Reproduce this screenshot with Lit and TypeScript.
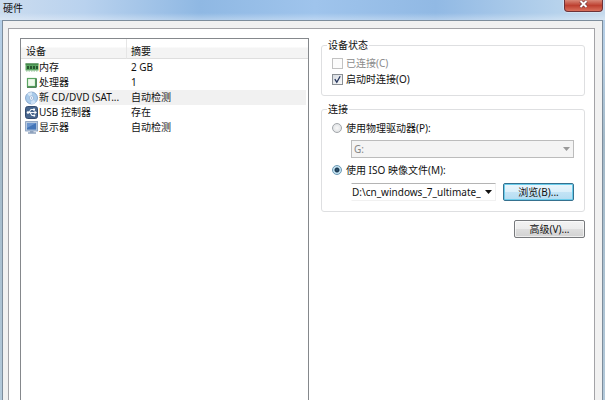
import { LitElement, html, css, svg, nothing } from "lit";
import { customElement, state } from "lit/decorators.js";

interface Device {
  icon: keyof typeof icons;
  name: string;
  summary: string;
}

const icons = {
  memory: svg`
    <rect x="0.5" y="2.5" width="13" height="7" fill="#5aa561"/>
    <rect x="0.5" y="2.5" width="13" height="1" fill="#37773f"/>
    <path d="M2 5h2v3h-2zM5 5h2v3h-2zM8 5h2v3h-2zM11 5h2v3h-2z" fill="#27552f"/>
    <path d="M1 10h12" stroke="#8fc093" stroke-dasharray="1.5 1"/>`,
  cpu: svg`
    <rect x="2.5" y="2.5" width="8" height="8" fill="#eefaeb" stroke="#5aa562" stroke-width="1.2"/>
    <path d="M2 11.3h9.3v-9" fill="none" stroke="#2f6b37"/>`,
  disc: svg`
    <circle cx="6.5" cy="7" r="6" fill="#a9cbea" stroke="#7899c4" stroke-width="0.8"/>
    <path d="M6.5 7 2 2.8A6 6 0 0 1 7 1.2z" fill="#d6e8f8"/>
    <path d="M6.5 7 11 11.2A6 6 0 0 1 6 13z" fill="#cde1f5"/>
    <circle cx="6.5" cy="7" r="2.2" fill="#f6faff" stroke="#8eabd0" stroke-width="0.7"/>
    <circle cx="6.5" cy="7" r="0.8" fill="#7f9fc8"/>`,
  usb: svg`
    <rect x="0.5" y="0.5" width="12" height="12" rx="2.2" fill="#48668d" stroke="#344c70"/>
    <path d="M2.5 6.5h8M4 6.5l2-3h2.5M5 6.5l2 3h2" fill="none" stroke="#f3f7fc" stroke-width="1.1"/>
    <circle cx="3" cy="6.5" r="1.3" fill="#fff"/>
    <path d="M9.5 4.7 12 6.5 9.5 8.3z" fill="#fff"/>
    <rect x="8" y="2.6" width="2" height="2" fill="#fff"/>
    <circle cx="9.2" cy="9.6" r="1.1" fill="#fff"/>`,
  display: svg`
    <rect x="0.6" y="0.6" width="12" height="9.4" fill="#b9cbe0" stroke="#7f97b8" stroke-width="0.8"/>
    <rect x="2" y="2" width="9.2" height="6.6" fill="#4375b8"/>
    <path d="M2 2h9.2L2 7z" fill="#6c96cf"/>
    <path d="M5 10h3.5v1.2h2.5v1.5h-8v-1.5h2z" fill="#8fa2bd"/>`,
};

const arrow = svg`<path d="M0 0h7L3.5 4z" fill="currentColor"/>`;

@customElement("app-root")
export class AppRoot extends LitElement {
  @state() private selected = 2;
  @state() private source: "drive" | "iso" = "iso";
  @state() private connectOnStart = true;

  private devices: Device[] = [
    { icon: "memory", name: "内存", summary: "2 GB" },
    { icon: "cpu", name: "处理器", summary: "1" },
    { icon: "disc", name: "新 CD/DVD (SAT...", summary: "自动检测" },
    { icon: "usb", name: "USB 控制器", summary: "存在" },
    { icon: "display", name: "显示器", summary: "自动检测" },
  ];

  static styles = css`
    :host {
      display: block;
      font: 10px/15px "Noto Sans", "Noto Sans CJK SC", sans-serif;
      color: #111;
    }
    * {
      box-sizing: border-box;
    }
    .window {
      display: flex;
      flex-direction: column;
      min-height: 100vh;
      padding: 0 2px;
      background: linear-gradient(#b4cfea, #b5cde2 60px, #a3b9c8 140px, #b3c9da);
    }
    .titlebar {
      display: flex;
      justify-content: space-between;
      align-items: flex-start;
      height: 20px;
      margin: 0 -2px;
      padding: 0 2px 0 3px;
      background:
        linear-gradient(#ffffff00 13px, #ffffff50),
        linear-gradient(90deg, #cbdcef, #b9d2ee 14%, #8fb8e3 33%, #9fc4ec 52%, #91b9e4 72%, #b6d2ec 92%, #c5d9ec);
    }
    h1 {
      margin: 0;
      padding-top: 1px;
      font: inherit;
    }
    .close {
      display: grid;
      place-items: center;
      width: 39px;
      height: 12px;
      padding: 0 0 3px;
      border: 1px solid #6d3238;
      border-top: 0;
      border-radius: 0 0 4px 4px;
      background: linear-gradient(#d88878, #bd4030 50%, #d9705c);
      box-shadow: 0 0 0 1px #dfe9f4a0;
    }
    .client {
      flex: 1;
      display: flex;
      padding: 7px 7px 0 5px;
      border: 1px solid #7d8d9c;
      border-bottom: 0;
      background: #f1f1f1;
    }
    .page {
      flex: 1;
      display: flex;
      gap: 12px;
      padding: 9px 9px 0 11px;
      border: 1px solid #a3a3a7;
      border-bottom: 0;
      background: #fff;
    }
    .list {
      flex: 1;
      min-width: 0;
      border: 1px solid #85888c;
      border-bottom: 0;
    }
    table {
      width: 100%;
      border-collapse: separate;
      border-spacing: 0;
      table-layout: fixed;
    }
    th {
      height: 20px;
      padding: 5px 0 0 5px;
      border-bottom: 1px solid #dedede;
      background: linear-gradient(#fff 8px, #f4f4f4 9px);
      font-weight: normal;
      text-align: left;
      line-height: 14px;
    }
    .name-col {
      width: 105px;
    }
    th + th {
      padding-left: 4px;
      border-left: 1px solid #e6e6e6;
    }
    .gap td {
      height: 1px;
    }
    td {
      height: 15px;
      padding: 0;
      line-height: 15px;
      white-space: nowrap;
    }
    .device {
      display: flex;
      align-items: center;
      height: 15px;
      padding-left: 4px;
    }
    .device svg {
      flex: none;
      width: 14px;
      height: 14px;
    }
    .device span {
      flex: 1;
    }
    .summary {
      padding-left: 5px;
      border-right: 2px solid #fff;
    }
    .selected .device span,
    .selected .summary {
      background: #f1f1f1;
    }
    .settings {
      display: flex;
      flex-direction: column;
      align-items: flex-end;
      width: 264px;
    }
    fieldset {
      width: 100%;
      min-width: 0;
      margin: 0 0 6px;
      padding: 3px 10px 8px;
      border: 1px solid #dedfe1;
      border-radius: 3px;
    }
    .source {
      padding: 4px 10px 10px;
      margin-bottom: 8px;
    }
    legend {
      margin-left: -5px;
      padding: 0 1px;
      line-height: 14px;
    }
    .option {
      display: flex;
      align-items: center;
      gap: 3px;
      width: max-content;
      height: 16px;
    }
    .option.off {
      color: #8b8b8b;
    }
    .box {
      display: grid;
    }
    .box > * {
      grid-area: 1 / 1;
    }
    .box svg {
      width: 11px;
      height: 11px;
      pointer-events: none;
    }
    input {
      appearance: none;
      width: 11px;
      height: 11px;
      margin: 0;
      border: 1px solid #8a8f94;
      background: linear-gradient(135deg, #d7dce2, #fafafa);
    }
    input:disabled {
      border-color: #c2c2c2;
      background: #fcfcfc;
    }
    input[type="radio"] {
      width: 10px;
      height: 10px;
      margin-right: 1px;
      border-color: #a2a6aa;
      border-radius: 50%;
      background: radial-gradient(#f8f8f8, #d9dcdf);
    }
    input[type="radio"]:checked {
      border-color: #6d9ab5;
      background: radial-gradient(#4f9fc2 0, #152f49 1px, #24435c 2px, #c5e3f2 3px);
    }
    .row {
      display: flex;
      gap: 7px;
      margin: 4px 0 4px 19px;
    }
    .row.file {
      margin: 5px 0 0 19px;
    }
    .combo {
      flex: 1;
      min-width: 0;
      display: grid;
      align-items: center;
    }
    .combo > * {
      grid-area: 1 / 1;
    }
    .combo svg {
      justify-self: end;
      width: 7px;
      height: 4px;
      margin-right: 4px;
      pointer-events: none;
    }
    .combo.off svg {
      color: #999;
    }
    select {
      appearance: none;
      width: 100%;
      height: 18px;
      padding: 0 14px 0 0;
      border: 1px solid #f1f1f1;
      border-top-color: #b4b4b4;
      border-left-color: #fff;
      border-radius: 0;
      background: #fff;
      color: inherit;
      font: inherit;
      overflow: hidden;
    }
    select:disabled {
      padding-left: 2px;
      border-color: #bcbcbc;
      background: #f4f4f4;
      color: #858585;
      opacity: 1;
    }
    .push {
      width: 71px;
      height: 18px;
      padding: 0;
      border: 1px solid #77797c;
      border-radius: 2px;
      background: linear-gradient(#f3f3f3, #ececec 50%, #dedede 51%, #d2d2d2);
      box-shadow: inset 0 0 0 1px #ffffffa0;
      color: inherit;
      font: inherit;
      line-height: 16px;
    }
    .push.default {
      border-color: #35718f;
      background: linear-gradient(#eaf6fc, #daeffa 50%, #c3e4f6 51%, #b4dcf1);
      box-shadow: inset 0 0 0 1px #6bcdec;
    }
  `;

  private renderDevice(device: Device, index: number) {
    return html`
      <tr class=${index === this.selected ? "selected" : ""} @click=${() => (this.selected = index)}>
        <td>
          <div class="device">
            <svg viewBox="0 0 14 14" aria-hidden="true">${icons[device.icon]}</svg>
            <span>${device.name}</span>
          </div>
        </td>
        <td class="summary">${device.summary}</td>
      </tr>
    `;
  }

  render() {
    return html`
      <div class="window">
        <header class="titlebar">
          <h1>硬件</h1>
          <button class="close" aria-label="关闭">
            <svg width="9" height="8" viewBox="0 0 9 8" aria-hidden="true">
              <path d="M1.5 1l6 6M7.5 1l-6 6" stroke="#6a3036" stroke-width="3.2"/>
              <path d="M1.5 1l6 6M7.5 1l-6 6" stroke="#fff" stroke-width="2"/>
            </svg>
          </button>
        </header>
        <main class="client">
          <div class="page">
            <section class="list">
              <table>
                <thead>
                  <tr><th class="name-col">设备</th><th>摘要</th></tr>
                </thead>
                <tbody>
                  <tr class="gap"><td colspan="2"></td></tr>
                  ${this.devices.map((d, i) => this.renderDevice(d, i))}
                </tbody>
              </table>
            </section>
            <section class="settings">
              <fieldset>
                <legend>设备状态</legend>
                <label class="option off">
                  <input type="checkbox" disabled />已连接(C)
                </label>
                <label class="option">
                  <span class="box">
                    <input
                      type="checkbox"
                      .checked=${this.connectOnStart}
                      @change=${() => (this.connectOnStart = !this.connectOnStart)}
                    />
                    ${this.connectOnStart
                      ? html`<svg viewBox="0 0 11 11" aria-hidden="true">
                          <path d="M2.8 5.2l2 3 3.4-6" fill="none" stroke="#27375e" stroke-width="1.3"/>
                        </svg>`
                      : nothing}
                  </span>
                  启动时连接(O)
                </label>
              </fieldset>
              <fieldset class="source">
                <legend>连接</legend>
                <label class="option">
                  <input type="radio" name="source" .checked=${this.source === "drive"}
                    @change=${() => (this.source = "drive")} />使用物理驱动器(P):
                </label>
                <div class="row">
                  <div class="combo off">
                    <select aria-label="物理驱动器" ?disabled=${this.source !== "drive"}>
                      <option>G:</option>
                    </select>
                    <svg viewBox="0 0 7 4" aria-hidden="true">${arrow}</svg>
                  </div>
                </div>
                <label class="option">
                  <input type="radio" name="source" .checked=${this.source === "iso"}
                    @change=${() => (this.source = "iso")} />使用 ISO 映像文件(M):
                </label>
                <div class="row file">
                  <div class="combo">
                    <select aria-label="ISO 映像文件">
                      <option>D:\\cn_windows_7_ultimate_</option>
                    </select>
                    <svg viewBox="0 0 7 4" aria-hidden="true">${arrow}</svg>
                  </div>
                  <button class="push default">浏览(B)...</button>
                </div>
              </fieldset>
              <button class="push">高级(V)...</button>
            </section>
          </div>
        </main>
      </div>
    `;
  }
}
